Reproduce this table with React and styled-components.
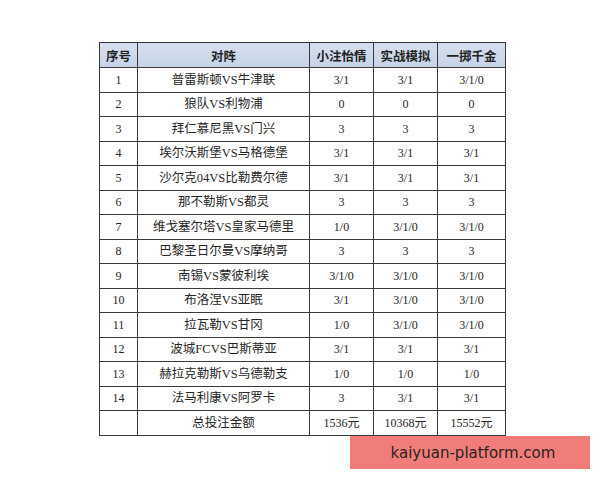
import React from 'react';
import styled, { createGlobalStyle } from 'styled-components';

const GlobalStyle = createGlobalStyle`
  html, body {
    margin: 0;
    padding: 0;
    background: #fff;
  }
`;

const Page = styled.div`
  position: relative;
  width: 600px;
  height: 480px;
  padding: 42px 0 0 99px;
  box-sizing: border-box;
  background: #fff;
  font-family: "Liberation Serif", "Noto Sans CJK SC", serif;
  color: #262626;
`;

const Table = styled.table`
  border-collapse: collapse;
  table-layout: fixed;
  width: 402px;
  border: 1.5px solid #333;
`;

const HeadCell = styled.th`
  height: 24px;
  padding: 0;
  background: linear-gradient(#d5dfee, #c6d3e7);
  border: 1px solid #3a3a3a;
  font-family: "Noto Sans CJK SC", sans-serif;
  font-weight: 700;
  font-size: 12.5px;
  color: #222;
  text-align: center;
  width: ${(p) => p.w}px;
`;

const Cell = styled.td`
  height: 23.5px;
  padding: 0;
  border: 1px solid #3a3a3a;
  font-size: ${(p) => (p.name ? '12.5px' : '12px')};
  text-align: center;
  white-space: nowrap;
  line-height: 1;
`;

const Watermark = styled.div`
  position: absolute;
  left: 350px;
  top: 436px;
  width: 240px;
  height: 33px;
  background: #f17d7a;
  display: flex;
  align-items: center;
  justify-content: center;
  font-family: "DejaVu Sans", sans-serif;
  font-size: 15px;
  color: #2a2222;
  padding-left: 6px;
  box-sizing: border-box;
`;

const rows = [
  ['1', '普雷斯顿VS牛津联', '3/1', '3/1', '3/1/0'],
  ['2', '狼队VS利物浦', '0', '0', '0'],
  ['3', '拜仁慕尼黑VS门兴', '3', '3', '3'],
  ['4', '埃尔沃斯堡VS马格德堡', '3/1', '3/1', '3/1'],
  ['5', '沙尔克04VS比勒费尔德', '3/1', '3/1', '3/1'],
  ['6', '那不勒斯VS都灵', '3', '3', '3'],
  ['7', '维戈塞尔塔VS皇家马德里', '1/0', '3/1/0', '3/1/0'],
  ['8', '巴黎圣日尔曼VS摩纳哥', '3', '3', '3'],
  ['9', '南锡VS蒙彼利埃', '3/1/0', '3/1/0', '3/1/0'],
  ['10', '布洛涅VS亚眠', '3/1', '3/1/0', '3/1/0'],
  ['11', '拉瓦勒VS甘冈', '1/0', '3/1/0', '3/1/0'],
  ['12', '波城FCVS巴斯蒂亚', '3/1', '3/1', '3/1'],
  ['13', '赫拉克勒斯VS乌德勒支', '1/0', '1/0', '1/0'],
  ['14', '法马利康VS阿罗卡', '3', '3/1', '3/1'],
  ['', '总投注金额', '1536元', '10368元', '15552元'],
];

export default function App() {
  return (
    <Page>
      <GlobalStyle />
      <Table>
        <thead>
          <tr>
            <HeadCell w={37}>序号</HeadCell>
            <HeadCell w={171}>对阵</HeadCell>
            <HeadCell w={63}>小注怡情</HeadCell>
            <HeadCell w={63}>实战模拟</HeadCell>
            <HeadCell w={67}>一掷千金</HeadCell>
          </tr>
        </thead>
        <tbody>
          {rows.map((r, i) => (
            <tr key={i}>
              <Cell>{r[0]}</Cell>
              <Cell name>{r[1]}</Cell>
              <Cell>{r[2]}</Cell>
              <Cell>{r[3]}</Cell>
              <Cell>{r[4]}</Cell>
            </tr>
          ))}
        </tbody>
      </Table>
      <Watermark>kaiyuan-platform.com</Watermark>
    </Page>
  );
}
